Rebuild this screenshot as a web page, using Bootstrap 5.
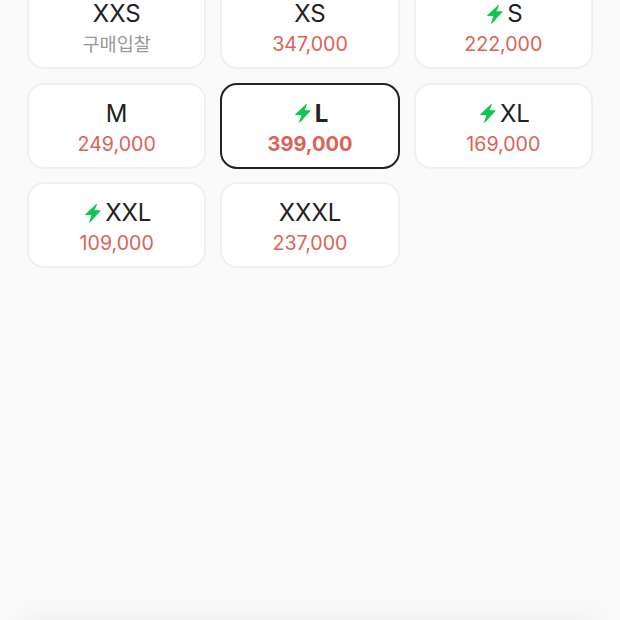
<!DOCTYPE html>
<html lang="ko">
<head>
  <meta charset="UTF-8">
  <title>Size select</title>
  <link href="https://cdn.jsdelivr.net/npm/bootstrap@5.3.3/dist/css/bootstrap.min.css" rel="stylesheet">
  <style>
    html, body {
      height: 100%;
      overflow: hidden;
    }
    body {
      background-color: #fafafa;
      font-family: Inter, "Noto Sans CJK KR", sans-serif;
    }
    .size-grid {
      display: grid;
      grid-template-columns: repeat(3, 1fr);
      gap: 13.5px 14px;
      margin: -17px 27px 0;
    }
    .size-btn {
      height: 86px;
      background: #fff;
      border: 2px solid #f0f0f0;
      border-radius: 17px;
      color: #222;
      padding: 7px 0 0;
    }
    .size-btn.is-active {
      border-color: #222;
    }
    .size-btn.is-active .size-name,
    .size-btn.is-active .size-price {
      font-weight: 700;
    }
    .size-btn.is-active .size-price {
      font-size: 20px;
    }
    .size-name {
      font-size: 24px;
      line-height: 26px;
      letter-spacing: -0.1px;
    }
    .size-price {
      font-size: 19.6px;
      line-height: 28px;
      margin-top: 3px;
      color: #dc6256;
    }
    .size-price.no-price {
      font-size: 18.6px;
      color: #999;
    }
    .bolt {
      width: 19px;
      height: 21px;
      margin-right: 4px;
      fill: #0fc451;
      stroke: #0fc451;
      stroke-linejoin: round;
      stroke-width: 1;
    }
    .bottom-fade {
      position: fixed;
      left: 20px;
      right: 20px;
      bottom: -20px;
      height: 20px;
      box-shadow: 0 -4px 26px rgba(0, 0, 0, 0.05);
    }
  </style>
</head>
<body>

  <div class="size-grid">
    <button type="button" class="size-btn d-flex flex-column align-items-center justify-content-center">
      <span class="size-name">XXS</span>
      <span class="size-price no-price">구매입찰</span>
    </button>
    <button type="button" class="size-btn d-flex flex-column align-items-center justify-content-center">
      <span class="size-name">XS</span>
      <span class="size-price">347,000</span>
    </button>
    <button type="button" class="size-btn d-flex flex-column align-items-center justify-content-center">
      <span class="size-name d-flex align-items-center"><svg class="bolt" viewBox="0 0 19 21"><path d="M14.5 1.3 L3.5 11.6 L10.2 11.6 L7.6 19.3 L18.2 7.8 L11.8 7.8 Z"/></svg>S</span>
      <span class="size-price">222,000</span>
    </button>
    <button type="button" class="size-btn d-flex flex-column align-items-center justify-content-center">
      <span class="size-name">M</span>
      <span class="size-price">249,000</span>
    </button>
    <button type="button" class="size-btn is-active d-flex flex-column align-items-center justify-content-center">
      <span class="size-name d-flex align-items-center"><svg class="bolt" viewBox="0 0 19 21"><path d="M14.5 1.3 L3.5 11.6 L10.2 11.6 L7.6 19.3 L18.2 7.8 L11.8 7.8 Z"/></svg>L</span>
      <span class="size-price">399,000</span>
    </button>
    <button type="button" class="size-btn d-flex flex-column align-items-center justify-content-center">
      <span class="size-name d-flex align-items-center"><svg class="bolt" viewBox="0 0 19 21"><path d="M14.5 1.3 L3.5 11.6 L10.2 11.6 L7.6 19.3 L18.2 7.8 L11.8 7.8 Z"/></svg>XL</span>
      <span class="size-price">169,000</span>
    </button>
    <button type="button" class="size-btn d-flex flex-column align-items-center justify-content-center">
      <span class="size-name d-flex align-items-center"><svg class="bolt" viewBox="0 0 19 21"><path d="M14.5 1.3 L3.5 11.6 L10.2 11.6 L7.6 19.3 L18.2 7.8 L11.8 7.8 Z"/></svg>XXL</span>
      <span class="size-price">109,000</span>
    </button>
    <button type="button" class="size-btn d-flex flex-column align-items-center justify-content-center">
      <span class="size-name">XXXL</span>
      <span class="size-price">237,000</span>
    </button>
  </div>

  <div class="bottom-fade"></div>

  <script src="https://cdn.jsdelivr.net/npm/bootstrap@5.3.3/dist/js/bootstrap.bundle.min.js"></script>
</body>
</html>
